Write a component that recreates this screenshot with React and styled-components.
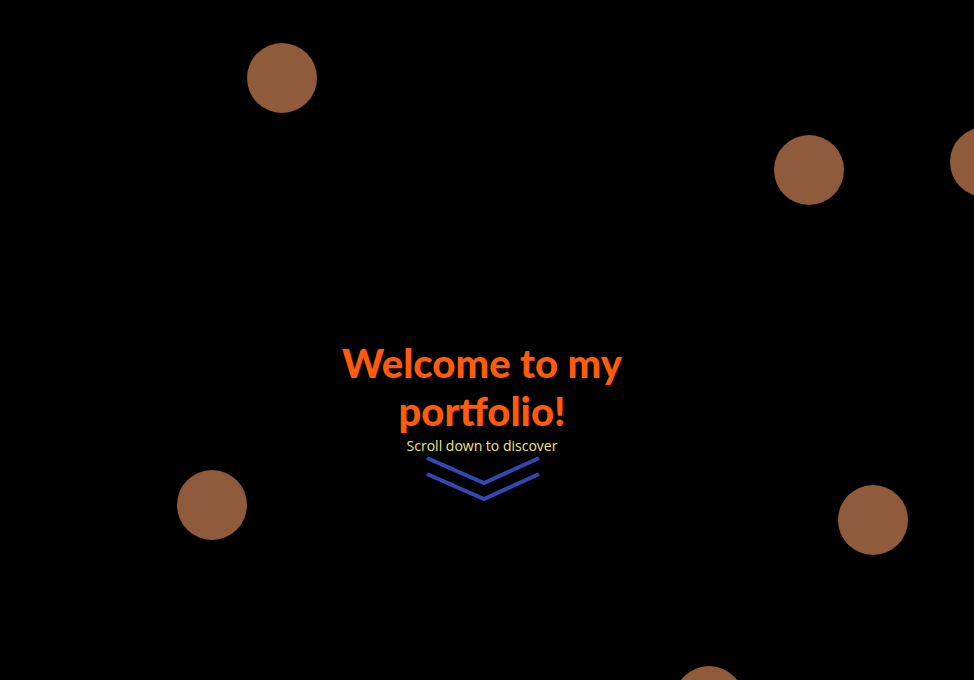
import styled, { createGlobalStyle } from "styled-components"

const Global = createGlobalStyle`
    html, body {
        margin: 0;
        padding: 0;
        background: #000;
    }
`;

const Page = styled.div`
    position: relative;
    width: 100%;
    height: 680px;
    overflow: hidden;
    background: #000;
`;

const Bubble = styled.div`
    position: absolute;
    width: 70px;
    height: 70px;
    border-radius: 50%;
    background: #8f5b3a;
`;

const Hero = styled.div`
    display: flex;
    flex-direction: column;
    align-items: center;
    padding-top: 339px;
    padding-right: 10px;
`;

const Title = styled.h1`
    margin: 0;
    width: 310px;
    text-align: center;
    font-family: Lato, "Noto Sans", sans-serif;
    font-weight: 900;
    font-size: 40px;
    line-height: 48px;
    color: #ff5b0c;
`;

const Subtitle = styled.p`
    margin: 1px 0 0;
    font-family: "Open Sans", sans-serif;
    font-size: 14px;
    line-height: 20px;
    color: #f2e78c;
`;

const Chevron = styled.svg`
    margin-top: -1px;
    display: block;
`;

const bubbles = [
    { left: 247, top: 43 },
    { left: 774, top: 135 },
    { left: 950, top: 127 },
    { left: 177, top: 470 },
    { left: 838, top: 485 },
    { left: 674, top: 666 },
];

function App() {
    return (
        <>
            <Global />
            <Page>
                {bubbles.map((b, i) => (
                    <Bubble key={i} style={{ left: b.left, top: b.top }} />
                ))}
                <Hero>
                    <Title>Welcome to my portfolio!</Title>
                    <Subtitle>Scroll down to discover</Subtitle>
                    <Chevron width="118" height="48" viewBox="0 0 118 48">
                        <polyline points="4,3 61,28 116,3" fill="none" stroke="#3249b4" strokeWidth="4" />
                        <polyline points="4,19 61,44 116,19" fill="none" stroke="#3249b4" strokeWidth="4" />
                    </Chevron>
                </Hero>
            </Page>
        </>
    );
}

export default App;
